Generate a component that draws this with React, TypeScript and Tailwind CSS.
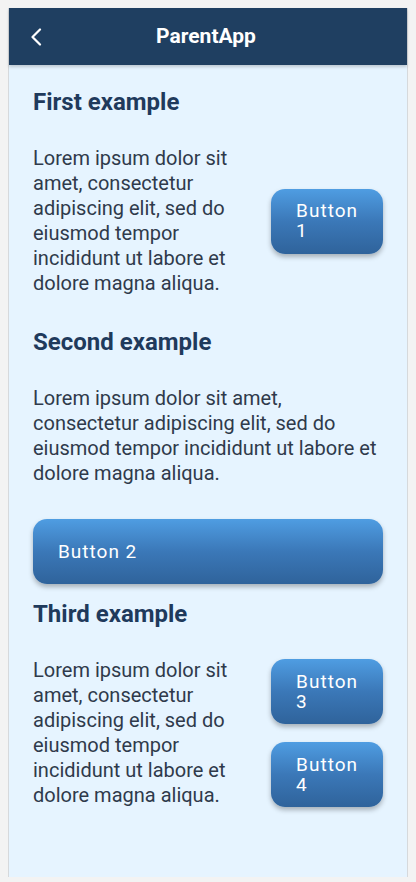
const lorem =
  "Lorem ipsum dolor sit amet, consectetur adipiscing elit, sed do eiusmod tempor incididunt ut labore et dolore magna aliqua.";

function AppButton({
  label,
  wide = false,
}: {
  label: string;
  wide?: boolean;
}) {
  return (
    <button
      className={`flex h-[65px] items-center rounded-[14px] bg-gradient-to-b from-[#4f9de2] via-[#3b78b8] to-[#2f639b] px-[25px] text-left text-[19px] font-normal leading-[20px] tracking-[1px] text-white shadow-[0_3px_5px_rgba(0,0,0,0.28)] ${
        wide ? "w-full" : "w-min shrink-0"
      }`}
    >
      {label}
    </button>
  );
}

function Heading({ children }: { children: React.ReactNode }) {
  return (
    <h2 className="text-[24px] font-bold leading-[32px] text-[#1f3a5c]">
      {children}
    </h2>
  );
}

function Paragraph({ className = "" }: { className?: string }) {
  return (
    <p className={`text-[20px] leading-[25px] text-[#2f3a4b] ${className}`}>
      {lorem}
    </p>
  );
}

export default function App() {
  return (
    <div
      className="min-h-screen bg-[#f3f3f3] p-2"
      style={{ fontFamily: "Roboto, 'Liberation Sans', sans-serif" }}
    >
      <div className="flex h-[869px] flex-col border-x border-[#d6d9dc] bg-[#e6f4ff]">
        {/* Header */}
        <header className="relative flex h-[57px] shrink-0 items-center justify-center bg-[#1f3f61] shadow-[0_2px_3px_rgba(0,0,0,0.18)]">
          <svg
            className="absolute left-[21px]"
            width="12"
            height="18"
            viewBox="0 0 12 18"
            fill="none"
          >
            <path
              d="M10 1.5 2.5 9 10 16.5"
              stroke="white"
              strokeWidth="2.2"
              strokeLinecap="round"
              strokeLinejoin="round"
            />
          </svg>
          <h1 className="pr-1 text-[21px] font-bold text-white">ParentApp</h1>
        </header>

        {/* Content */}
        <main className="flex flex-col px-6 pt-[21px]">
          <Heading>First example</Heading>
          <div className="mt-[28px] flex items-center gap-6">
            <Paragraph className="min-w-0 flex-1" />
            <AppButton label="Button 1" />
          </div>

          <div className="mt-[30px]">
            <Heading>Second example</Heading>
          </div>
          <Paragraph className="mt-[28px]" />
          <div className="mt-[33px]">
            <AppButton label="Button 2" wide />
          </div>

          <div className="mt-[14px]">
            <Heading>Third example</Heading>
          </div>
          <div className="mt-[28px] flex items-center gap-6">
            <Paragraph className="min-w-0 flex-1" />
            <div className="flex shrink-0 flex-col gap-[18px]">
              <AppButton label="Button 3" />
              <AppButton label="Button 4" />
            </div>
          </div>
        </main>
      </div>
    </div>
  );
}
